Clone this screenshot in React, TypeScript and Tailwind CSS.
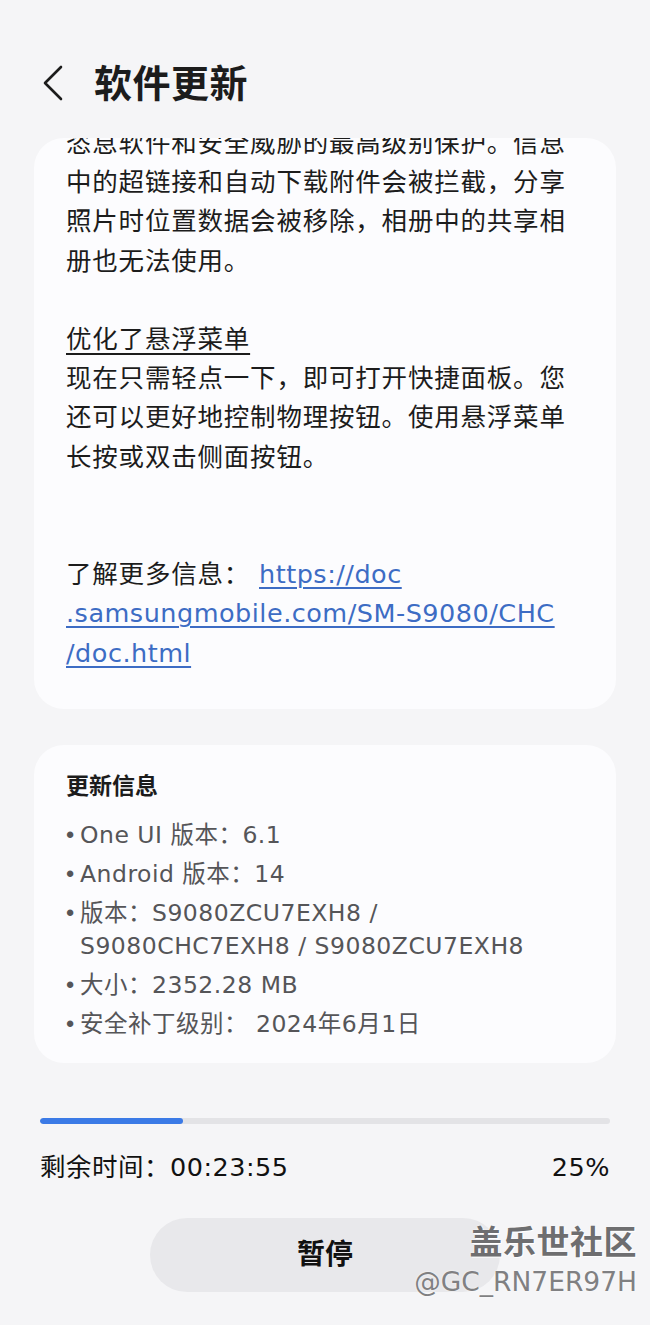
import { ReactNode } from "react";

const font = { fontFamily: '"DejaVu Sans", "Noto Sans CJK SC", sans-serif' };

function Bullet({ children }: { children: ReactNode }) {
    return (
        <li className="flex">
            <span className="w-[14px] shrink-0 tracking-normal" style={{ fontFamily: '"Liberation Sans", sans-serif' }}>
                •
            </span>
            <span>{children}</span>
        </li>
    );
}

export default function App() {
    return (
        <div className="relative h-[1325px] w-[650px] overflow-hidden bg-[#f5f5f7] text-[#1c1c1c]" style={font}>
            <header className="flex h-[138px] items-start pt-[62px] pl-[40px]">
                <svg width="26" height="38" viewBox="0 0 26 38" fill="none" className="mt-[2px]">
                    <path d="M21 3 L5 19 L21 35" stroke="#1c1c1c" strokeWidth="2.6" strokeLinecap="round" strokeLinejoin="round" />
                </svg>
                <h1 className="ml-[28px] text-[38px] font-bold leading-[44px] tracking-[0.5px]">软件更新</h1>
            </header>

            <section className="mx-[34px] overflow-hidden rounded-[30px] bg-[#fcfcfe] px-[32px] pb-[36px]">
                <div className="-mt-[14px] text-[25.5px] leading-[39.2px] tracking-[0.8px]">
                    <p>
                        恣息软件和安全威胁的最高级别保护。信息
                        <br />
                        中的超链接和自动下载附件会被拦截，分享
                        <br />
                        照片时位置数据会被移除，相册中的共享相
                        <br />
                        册也无法使用。
                    </p>
                    <p className="mt-[39.2px]">
                        <span className="underline decoration-[1.5px] underline-offset-[5px]">优化了悬浮菜单</span>
                        <br />
                        现在只需轻点一下，即可打开快捷面板。您
                        <br />
                        还可以更好地控制物理按钮。使用悬浮菜单
                        <br />
                        长按或双击侧面按钮。
                    </p>
                    <p className="mt-[78.4px]">
                        了解更多信息：{" "}
                        <span className="tracking-[0.5px] text-[#3d6cc4] underline decoration-[1.5px] underline-offset-[4px]">
                            https://doc
                            <br />
                            .samsungmobile.com/SM-S9080/CHC
                            <br />
                            /doc.html
                        </span>
                    </p>
                </div>
            </section>

            <section className="mx-[34px] mt-[36px] rounded-[30px] bg-[#fcfcfe] px-[32px] pt-[25px] pb-[22px]">
                <h2 className="text-[23px] font-bold leading-[32px]">更新信息</h2>
                <ul className="mt-[17px] flex flex-col gap-[6px] text-[23.5px] leading-[33px] tracking-[0.5px] text-[#555558]">
                    <Bullet>One UI 版本：6.1</Bullet>
                    <Bullet>Android 版本：14</Bullet>
                    <Bullet>
                        版本：S9080ZCU7EXH8 /
                        <br />
                        S9080CHC7EXH8 / S9080ZCU7EXH8
                    </Bullet>
                    <Bullet>大小：2352.28 MB</Bullet>
                    <Bullet>安全补丁级别： 2024年6月1日</Bullet>
                </ul>
            </section>

            <div className="mx-[40px] mt-[55px] h-[6px] overflow-hidden rounded-full bg-[#e3e3e6]">
                <div className="h-full rounded-full bg-[#3b7ae6]" style={{ width: "25%" }} />
            </div>

            <div className="mx-[40px] mt-[25px] flex items-center justify-between text-[25.5px] leading-[36px] tracking-[0.5px] text-[#111]">
                <span>剩余时间：00:23:55</span>
                <span>25%</span>
            </div>

            <div className="mt-[33px] flex justify-center">
                <button className="flex h-[74px] w-[350px] items-center justify-center rounded-full bg-[#e8e8eb] text-[28px] font-bold text-[#111]">
                    暂停
                </button>
            </div>

            <div className="pointer-events-none absolute right-[13px] top-[1224px] flex flex-col items-end leading-none text-[#6e6e70]">
                <span
                    className="text-[33px] font-bold tracking-[0.5px]"
                    style={{ fontFamily: '"Noto Sans CJK SC", sans-serif', textShadow: "0 0 2px #fff, 1px 1px 0 #fff" }}
                >
                    盖乐世社区
                </span>
                <span className="mt-[12px] text-[26.5px] text-[#808082]" style={{ textShadow: "0 0 2px #fff" }}>
                    @GC_RN7ER97H
                </span>
            </div>
        </div>
    );
}
